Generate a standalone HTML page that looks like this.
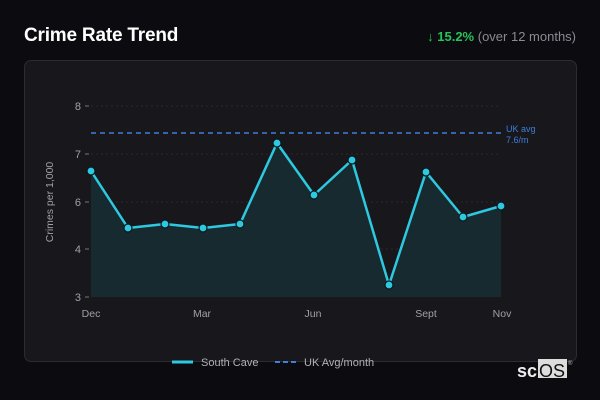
<!DOCTYPE html>
<html><head><meta charset="utf-8"><style>
html,body{margin:0;padding:0;background:#0c0b10;width:600px;height:400px;overflow:hidden;font-family:"Liberation Sans",sans-serif}
.t{position:absolute;left:24px;top:25px;color:#fff;font-size:19px;font-weight:bold;letter-spacing:-0.2px}
.r{position:absolute;right:24px;top:29px;font-size:13px;color:#8a8a90}
.r b{color:#27c25a}
.card{position:absolute;left:24px;top:60px;width:551px;height:300px;border:1px solid #2c2c32;border-radius:7px;background:#17171c}
svg{position:absolute;left:0;top:0}
</style></head><body>
<div class="t">Crime Rate Trend</div>
<div class="r"><b>↓ 15.2%</b> (over 12 months)</div>
<div class="card"></div>
<svg width="600" height="400" font-family="Liberation Sans,sans-serif">
<g stroke="#2a2a2f" stroke-dasharray="2,3" stroke-width="1">
<line x1="91" y1="106" x2="501" y2="106"/><line x1="91" y1="154" x2="501" y2="154"/><line x1="91" y1="202" x2="501" y2="202"/><line x1="91" y1="249" x2="501" y2="249"/>
</g>
<g stroke="#777" stroke-width="1"><line x1="85" y1="106" x2="89" y2="106"/><line x1="85" y1="154" x2="89" y2="154"/><line x1="85" y1="202" x2="89" y2="202"/><line x1="85" y1="249" x2="89" y2="249"/><line x1="85" y1="297" x2="89" y2="297"/></g>
<g fill="#a0a0a5" font-size="11" text-anchor="end"><text x="81" y="110">8</text><text x="81" y="158">7</text><text x="81" y="206">6</text><text x="81" y="253">4</text><text x="81" y="301">3</text></g>
<text transform="translate(53,202) rotate(-90)" fill="#a0a0a5" font-size="10.5" text-anchor="middle">Crimes per 1,000</text>
<polygon fill="#172a30" points="91,297 91,171 128,228 165,224 203,228 240,224 277,143 314,195 352,160 389,285 426,172 463,217 501,206 501,297"/>
<line x1="91" y1="133" x2="501" y2="133" stroke="#3f7fd9" stroke-width="1.6" stroke-dasharray="5,4"/>
<text x="506" y="132" fill="#3f7fd9" font-size="9">UK avg</text><text x="506" y="143" fill="#3f7fd9" font-size="9">7.6/m</text>
<polyline fill="none" stroke="#2ec9e0" stroke-width="2.5" stroke-linejoin="round" points="91,171 128,228 165,224 203,228 240,224 277,143 314,195 352,160 389,285 426,172 463,217 501,206"/>
<g fill="#2ec9e0" stroke="#0c1a1e" stroke-width="1.2">
<circle cx="91" cy="171" r="4"/><circle cx="128" cy="228" r="4"/><circle cx="165" cy="224" r="4"/><circle cx="203" cy="228" r="4"/><circle cx="240" cy="224" r="4"/><circle cx="277" cy="143" r="4"/><circle cx="314" cy="195" r="4"/><circle cx="352" cy="160" r="4"/><circle cx="389" cy="285" r="4"/><circle cx="426" cy="172" r="4"/><circle cx="463" cy="217" r="4"/><circle cx="501" cy="206" r="4"/>
</g>
<g fill="#a0a0a5" font-size="10.5" text-anchor="middle"><text x="91" y="317">Dec</text><text x="202" y="317">Mar</text><text x="313" y="317">Jun</text><text x="426" y="317">Sept</text><text x="502" y="317">Nov</text></g>
<line x1="172" y1="362" x2="193" y2="362" stroke="#2ec9e0" stroke-width="3"/>
<text x="201" y="366" fill="#b0b0b5" font-size="11">South Cave</text>
<line x1="275" y1="362" x2="297" y2="362" stroke="#3f7fd9" stroke-width="2" stroke-dasharray="5,3"/>
<text x="304" y="366" fill="#b0b0b5" font-size="11">UK Avg/month</text>
<rect x="538" y="359" width="29" height="19" fill="#ddd"/>
<text x="517" y="377" fill="#eee" font-size="18" font-weight="bold">sc</text>
<text x="539" y="377" fill="#111" font-size="18">OS</text>
<text x="568" y="365" fill="#bbb" font-size="6">®</text>
</svg>
</body></html>
